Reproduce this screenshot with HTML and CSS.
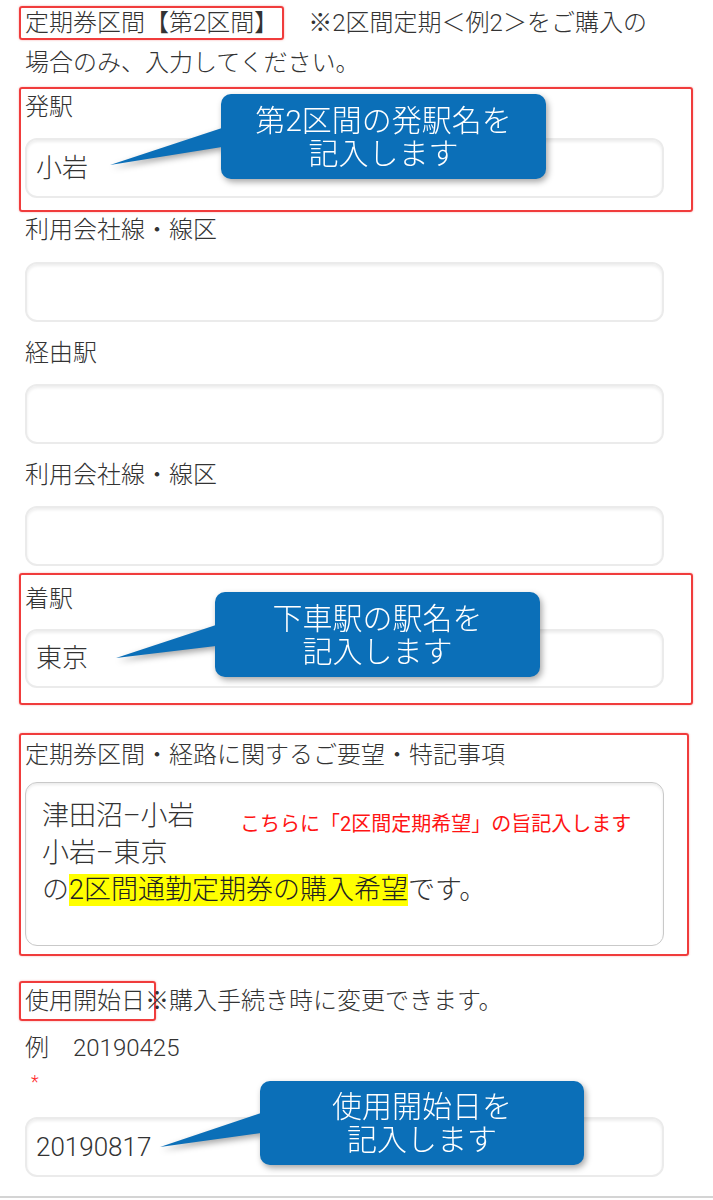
FILE: index.html
```html
<!DOCTYPE html>
<html lang="ja">
<head>
<meta charset="utf-8">
<title>定期券区間【第2区間】</title>
<link rel="stylesheet" href="styles.css">
</head>
<body>
<main class="page">
  <p class="intro"><span class="mark-title">定期券区間【第2区間】</span>　※2区間定期＜例2＞をご購入の<br>場合のみ、入力してください。</p>

  <section class="redbox box-from">
    <div class="label">発駅</div>
    <div class="input-wrap">
      <div class="input">小岩</div>
      <div class="callout c1">
        <svg class="tail" width="112" height="37" viewBox="0 0 112 37"><path d="M112 0 L0 37 L112 19 Z" fill="#0b6fb8"/></svg>
        <span>第2区間の発駅名を</span>
        <span>記入します</span>
      </div>
    </div>
  </section>

  <div class="field">
    <div class="label">利用会社線・線区</div>
    <div class="input"></div>
  </div>

  <div class="field">
    <div class="label">経由駅</div>
    <div class="input"></div>
  </div>

  <div class="field">
    <div class="label">利用会社線・線区</div>
    <div class="input"></div>
  </div>

  <section class="redbox box-to">
    <div class="label">着駅</div>
    <div class="input-wrap">
      <div class="input">東京</div>
      <div class="callout c2">
        <svg class="tail" width="100" height="33" viewBox="0 0 100 33"><path d="M100 0 L0 33 L100 21 Z" fill="#0b6fb8"/></svg>
        <span>下車駅の駅名を</span>
        <span>記入します</span>
      </div>
    </div>
  </section>

  <section class="redbox box-note">
    <div class="label">定期券区間・経路に関するご要望・特記事項</div>
    <div class="textarea">
      <div>津田沼–小岩</div>
      <div>小岩–東京</div>
      <div>の<mark>2区間通勤定期券の購入希望</mark>です。</div>
      <div class="note">こちらに「2区間定期希望」の旨記入します</div>
    </div>
  </section>

  <p class="date-label"><span class="mark-date">使用開始日</span>※購入手続き時に変更できます。</p>
  <p class="example">例　20190425</p>
  <p class="required">*</p>
  <div class="input-wrap date-wrap">
    <div class="input">20190817</div>
    <div class="callout c3">
      <svg class="tail" width="101" height="34" viewBox="0 0 101 34"><path d="M101 0 L0 34 L101 20 Z" fill="#0b6fb8"/></svg>
      <span>使用開始日を</span>
      <span>記入します</span>
    </div>
  </div>
  <div class="bottom-rule"></div>
</main>
</body>
</html>
```
FILE: styles.css
```css
html, body {
  margin: 0;
  padding: 0;
  background: #ffffff;
}

body {
  font-family: "Roboto", "Noto Sans CJK JP", sans-serif;
  font-weight: 300;
  color: #333333;
  font-size: 24px;
}

.page {
  padding: 0 49px 0 25px;
  width: 713px;
  box-sizing: border-box;
  overflow: hidden;
}

.intro {
  margin: 0;
  padding-top: 3px;
  line-height: 40px;
  white-space: nowrap;
}

.mark-title {
  display: inline-block;
  line-height: 30px;
  border: 2px solid #f03c3c;
  border-radius: 3px;
  box-shadow: 0 0 2px rgba(240, 60, 60, 0.5);
  padding: 0 4px 0 4px;
  margin-left: -6px;
}

.redbox {
  border: 2px solid #f03c3c;
  border-radius: 3px;
  box-shadow: 0 0 2px rgba(240, 60, 60, 0.45);
  margin-left: -6px;
  margin-right: -29px;
  padding-left: 4px;
  padding-right: 27px;
}

.label {
  line-height: 36px;
  white-space: nowrap;
}

.input-wrap {
  position: relative;
}

.input {
  height: 60px;
  box-sizing: border-box;
  border: 2px solid #ebebeb;
  border-radius: 12px;
  box-shadow: inset 0 2px 3px rgba(0, 0, 0, 0.07);
  background: #ffffff;
  padding: 0 9px;
  font-size: 26px;
  line-height: 56px;
  color: #333333;
}

.box-from {
  margin-top: 4px;
  padding-top: 0;
  padding-bottom: 12px;
}

.box-from .input-wrap {
  margin-top: 13px;
}

.field .input {
  margin-top: 14px;
}

.field + .field {
  margin-top: 13px;
}

.field + .field .input {
  margin-top: 13px;
}

.box-to {
  margin-top: 7px;
  padding-top: 6px;
  padding-bottom: 15px;
}

.box-to .input-wrap {
  margin-top: 12px;
}

.box-to .input {
  height: 59px;
  line-height: 55px;
}

.box-note {
  margin-top: 28px;
  margin-right: -25px;
  padding-right: 23px;
  padding-top: 2px;
  padding-bottom: 8px;
}

.textarea {
  position: relative;
  margin-top: 9px;
  height: 164px;
  box-sizing: border-box;
  border: 1.5px solid #c9c9c9;
  border-radius: 12px;
  box-shadow: inset 0 2px 3px rgba(0, 0, 0, 0.08);
  padding: 15px 16px;
  font-size: 27px;
  line-height: 37px;
  color: #333333;
}

.textarea mark {
  background: #ffff00;
  color: #222222;
}

.note {
  position: absolute;
  left: 214px;
  top: 28px;
  font-size: 20px;
  line-height: 26px;
  font-weight: 400;
  color: #ff1414;
  white-space: nowrap;
}

.date-label {
  margin: 25px 0 0;
  line-height: 40px;
  white-space: nowrap;
}

.mark-date {
  display: inline-block;
  line-height: 36px;
  border: 2px solid #f03c3c;
  border-radius: 3px;
  box-shadow: 0 0 2px rgba(240, 60, 60, 0.5);
  padding: 0 9px 0 4px;
  margin-left: -6px;
  margin-right: -11px;
}

.example {
  margin: 9px 0 0;
  line-height: 36px;
}

.required {
  margin: 6px 0 0 6px;
  font-size: 18px;
  line-height: 20px;
  color: #ff2a2a;
}

.date-wrap {
  margin-top: 25px;
}

.bottom-rule {
  margin: 19px -49px 0 -25px;
  height: 2px;
  background: #d4d4d4;
}

.callout {
  position: absolute;
  width: 325px;
  height: 85px;
  box-sizing: border-box;
  background: #0b6fb8;
  border-radius: 10px;
  color: #ffffff;
  font-size: 30px;
  line-height: 33px;
  display: flex;
  flex-direction: column;
  align-items: center;
  justify-content: center;
  white-space: nowrap;
  filter: drop-shadow(2px 3px 3px rgba(0, 0, 0, 0.35));
}

.callout span {
  position: relative;
}

.callout .tail {
  position: absolute;
  overflow: visible;
}

.c1 {
  left: 196px;
  top: -44px;
}

.c1 .tail {
  left: -111px;
  top: 34px;
}

.c2 {
  left: 190px;
  top: -37px;
}

.c2 .tail {
  left: -99px;
  top: 33px;
}

.c3 {
  left: 235px;
  top: -36px;
  width: 324px;
  height: 84px;
}

.c3 .tail {
  left: -100px;
  top: 32px;
}
```
